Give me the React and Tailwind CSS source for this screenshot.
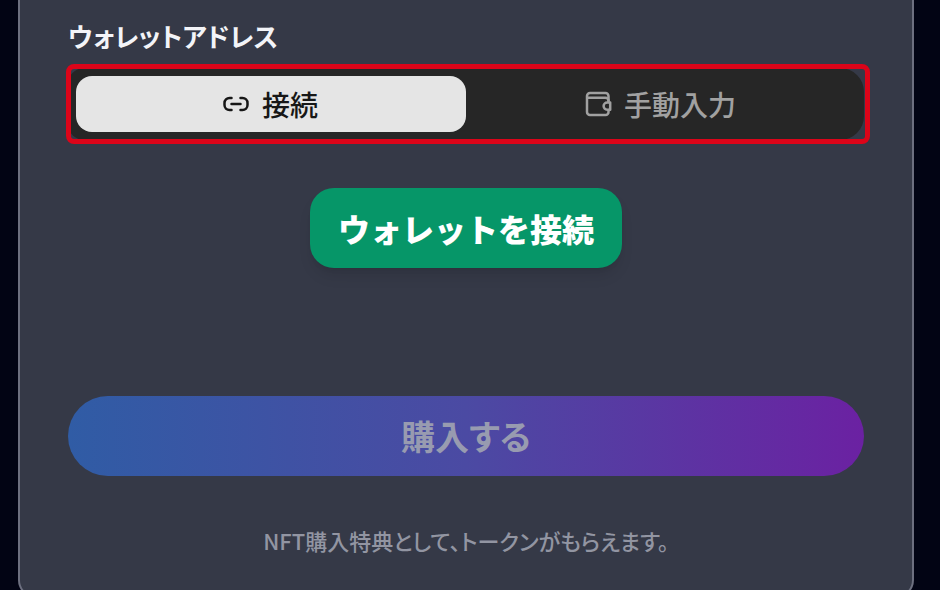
import React, { useState } from 'react';

const LinkIcon = () => (
  <svg
    className="h-7 w-7"
    viewBox="0 0 28 28"
    fill="none"
    stroke="currentColor"
    strokeWidth="2.5"
    strokeLinecap="round"
    strokeLinejoin="round"
    aria-hidden="true"
  >
    <path d="M9.5 8H7.500a5 5 0 0 0-5 5v2a5 5 0 0 0 5 5H9.500" />
    <path d="M18.500 8h2a5 5 0 0 1 5 5v2a5 5 0 0 1-5 5h-2" />
    <path d="M9.500 14h9" />
  </svg>
);

const WalletIcon = () => (
  <svg
    className="h-7 w-7"
    viewBox="0 0 28 28"
    fill="none"
    stroke="currentColor"
    strokeWidth="2.5"
    strokeLinecap="round"
    strokeLinejoin="round"
    aria-hidden="true"
  >
    <path d="M24.5 12V6a3 3 0 0 0-3-3H6a3 3 0 0 0-3 3v16a3 3 0 0 0 3 3h15.500a3 3 0 0 0 3-3v-2" />
    <path d="M3.500 7.800H21.500a3 3 0 0 1 3 3" />
    <path d="M26.200 12.500h-3a3.600 3.600 0 0 0 0 7.200h3z" />
  </svg>
);

const tabs = [
  { id: 'connect', label: '接続', icon: LinkIcon },
  { id: 'manual', label: '手動入力', icon: WalletIcon },
];

const App = () => {
  const [mode, setMode] = useState('connect');

  return (
    <div className="h-screen overflow-hidden bg-[#020414] pl-[18px] pr-[26px] font-['Noto_Sans_CJK_JP',sans-serif]">
      <main className="rounded-b-[18px] border-2 border-t-0 border-[#6d7080] bg-[#353947] px-12 pt-4 pb-10">
        {/* Wallet address */}
        <h2 id="wallet-label" className="mb-3 text-[26px] leading-10 font-bold text-[#f3f4f8] [font-feature-settings:'palt']">
          ウォレットアドレス
        </h2>

        <div className="relative">
          <div role="tablist" aria-labelledby="wallet-label" className="grid grid-cols-2 rounded-l-2xl rounded-r-3xl bg-[#262626] p-2">
            {tabs.map(({ id, label, icon: Icon }) => (
              <button
                key={id}
                type="button"
                role="tab"
                aria-selected={mode === id}
                onClick={() => setMode(id)}
                className={`flex h-14 items-center justify-center gap-3 rounded-2xl pr-0.5 text-[28px] leading-10 font-medium ${
                  mode === id ? 'bg-[#e5e5e5] text-[#171717]' : 'text-[#a1a1a1]'
                }`}
              >
                <Icon />
                {label}
              </button>
            ))}
          </div>
          {/* Highlight frame */}
          <div className="pointer-events-none absolute -top-1 -right-1.5 -bottom-1 -left-0.5 rounded-lg border-5 border-[#dc0419]"></div>
        </div>

        <div className="mt-12 flex justify-center">
          <button
            type="button"
            className="h-20 rounded-3xl bg-[#069668] px-7 text-[32px] leading-10 font-black text-white shadow-lg"
          >
            ウォレットを接続
          </button>
        </div>

        {/* Purchase */}
        <button
          type="button"
          disabled
          className="mt-32 h-20 w-full rounded-full bg-linear-to-r/srgb from-[#305ca5] via-[#4b4aa3] to-[#6b21a2] text-[34px] leading-10 font-bold text-[#989bb0] [font-feature-settings:'palt']"
        >
          購入する
        </button>

        <p className="mt-12 text-center text-[22px] leading-8 font-medium text-[#9295a2] [font-feature-settings:'palt']">
          NFT購入特典として、トークンがもらえます。
        </p>
      </main>
    </div>
  );
};

export default App;
